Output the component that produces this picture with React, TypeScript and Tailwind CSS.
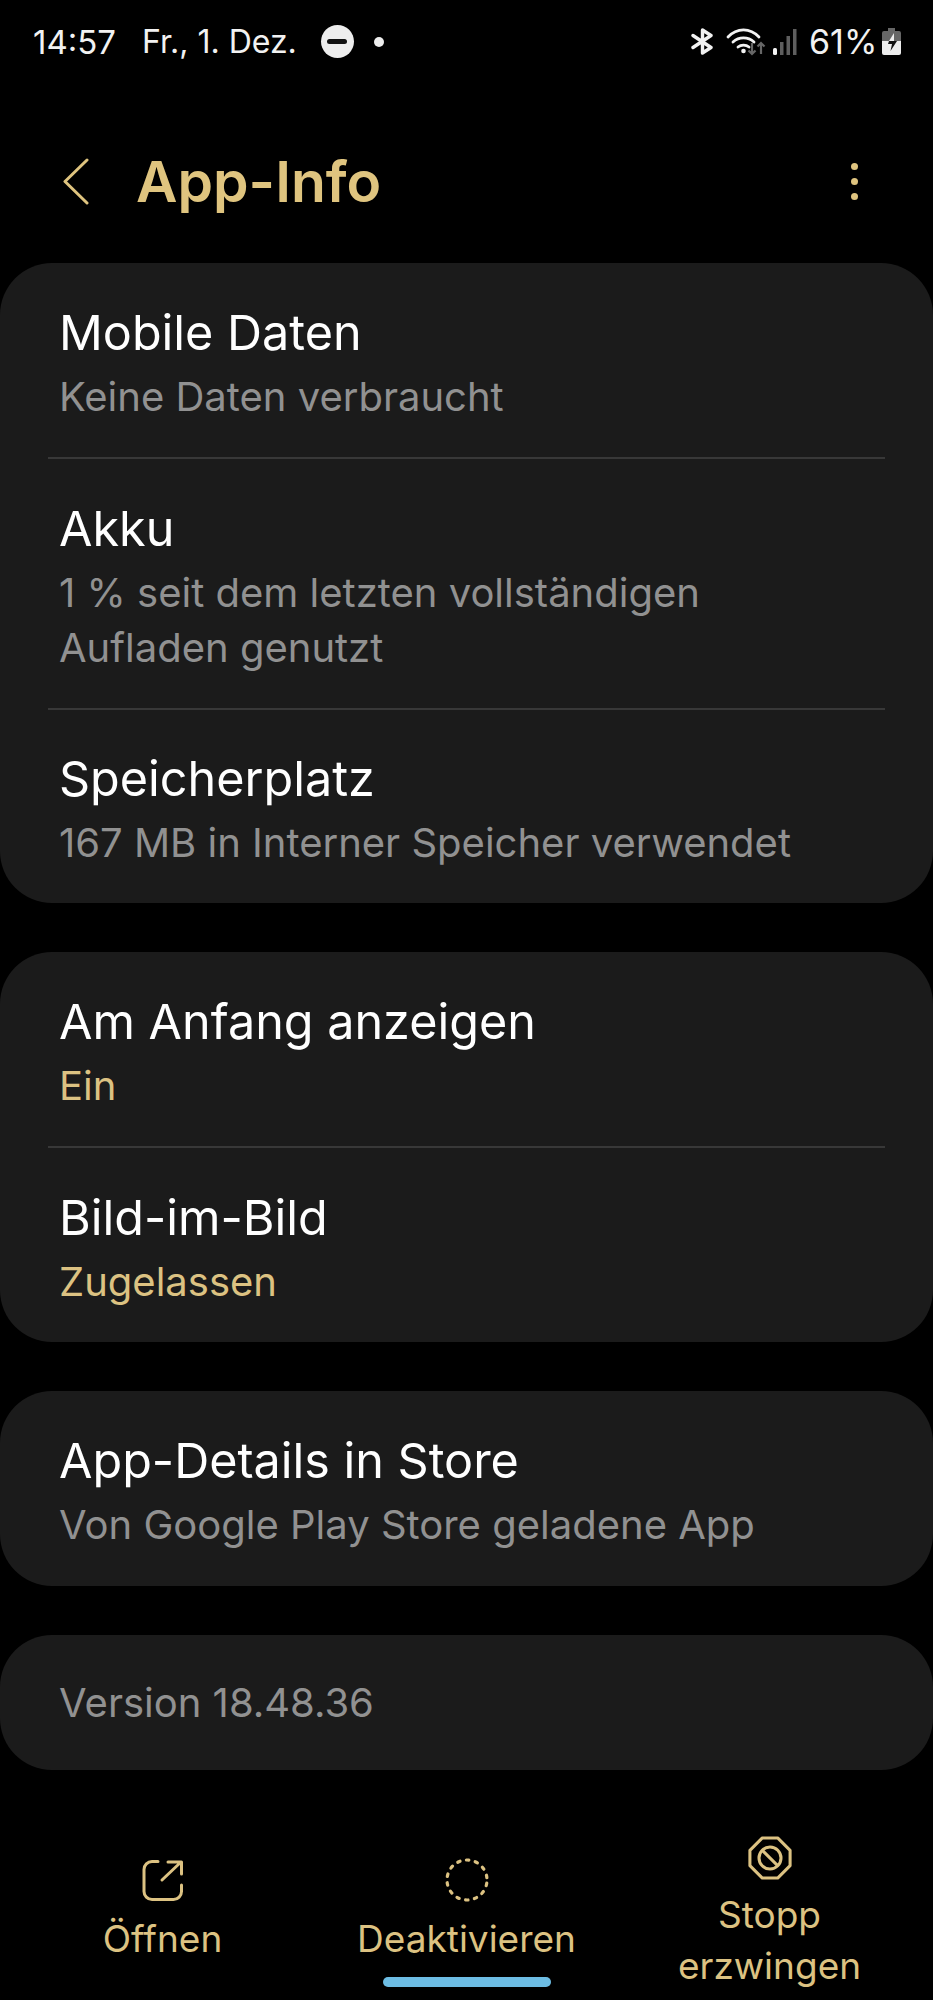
function StatusIcons() {
  return (
    <div className="flex items-center">
      {/* bluetooth */}
      <svg className="w-[23px] h-[27px]" viewBox="0 0 23 27" fill="none" stroke="#f2f2f2" strokeWidth="3.4" aria-hidden="true">
        <path d="M2 7.5l18 12-8.500 5.500V2l8.500 5.500-18 12" strokeLinejoin="round" strokeLinecap="round" />
      </svg>
      {/* wifi with data arrows */}
      <svg className="w-[40px] h-[28px] ml-[12px]" viewBox="0 0 40 28" fill="none" aria-hidden="true">
        <path d="M2 9c9-9.500 22-9.500 31 0M7 14c6-5.500 15-5.500 21 0M12 19c3-2.500 8-2.500 11 0" stroke="#f2f2f2" strokeWidth="2.800" strokeLinecap="round" />
        <circle cx="17.500" cy="23" r="2.300" fill="#f2f2f2" />
        <path d="M26 15v11m-3.500-3.500l3.500 3.500 3.500-3.500" stroke="#666" strokeWidth="2.200" />
        <path d="M35 26V15m-3.500 3.500l3.500-3.500 3.500 3.500" stroke="#666" strokeWidth="2.200" />
      </svg>
      {/* signal bars */}
      <svg className="w-[24px] h-[26px] ml-[7px]" viewBox="0 0 24 26" aria-hidden="true">
        <rect x="0" y="19" width="4" height="7" rx="1.500" fill="#f2f2f2" />
        <rect x="7" y="13" width="3.500" height="13" fill="#5e5e5e" />
        <rect x="13.500" y="7" width="3.500" height="19" fill="#5e5e5e" />
        <rect x="20" y="0" width="3.500" height="26" fill="#5e5e5e" />
      </svg>
      <span className="ml-[12px] w-[66px] text-[34px] leading-[40px]">61%</span>
      {/* battery charging */}
      <svg className="w-[19px] h-[27px] ml-[7px]" viewBox="0 0 19 27" aria-hidden="true">
        <path d="M6 0h7v3h4a2 2 0 012 2v8H0V5a2 2 0 012-2h4z" fill="#666" />
        <path d="M0 13h19v12a2 2 0 01-2 2H2a2 2 0 01-2-2z" fill="#ededed" />
        <path d="M12 5l-5 8h5z" fill="#ededed" />
        <path d="M7 13h8l-6.500 10 1.500-7H6z" fill="#111" />
      </svg>
    </div>
  )
}

function Row({ title, sub, accent, divider, nudge }: { title: string; sub: string[]; accent?: boolean; divider?: boolean; nudge?: boolean }) {
  return (
    <div className={`mx-[48px] pl-[11px] pt-[33px] pb-[33px] ${divider ? 'border-b-2 border-[#383838]' : ''} ${nudge ? '-mt-px' : ''}`}>
      <div className="text-[48.5px] leading-[73px] text-white">{title}</div>
      {sub.map((line) => (
        <div key={line} className={`text-[40px] leading-[55px] ${accent ? 'text-[#dcc282]' : 'text-[#919191]'}`}>
          {line}
        </div>
      ))}
    </div>
  )
}

export default function App() {
  return (
    <div className="relative w-[933px] h-[2000px] overflow-hidden bg-black text-[#f2f2f2] font-['Inter',sans-serif]">
      {/* status bar */}
      <div className="flex items-center justify-between pl-[33px] pr-[32px] pt-[21px] h-[62px]">
        <div className="flex items-center text-[32px] leading-[40px]">
          <span className="text-[33px]">14:57</span>
          <span className="ml-[26px]">Fr., 1. Dez.</span>
          <span className="ml-[24px] flex items-center justify-center w-[33px] h-[33px] rounded-full bg-[#ededed]">
            <span className="w-[20px] h-[5px] rounded-full bg-[#111]" />
          </span>
          <span className="ml-[20px] w-[10px] h-[10px] rounded-full bg-[#ededed]" />
        </div>
        <StatusIcons />
      </div>

      {/* header */}
      <div className="flex items-center h-[90px] mt-[75px] pl-[62px] pr-[75px] text-[#dfc47f]">
        <svg className="w-[28px] h-[48px]" viewBox="0 0 28 48" fill="none" stroke="currentColor" strokeWidth="3" strokeLinecap="round" strokeLinejoin="round" aria-hidden="true">
          <path d="M25 2L3 23.500l22 21.500" />
        </svg>
        <h1 className="ml-[46px] text-[57px] leading-[70px] font-semibold flex-1">App-Info</h1>
        <div className="flex flex-col gap-[8px] mb-[2px]">
          <span className="w-[7px] h-[7px] rounded-full bg-current" />
          <span className="w-[7px] h-[7px] rounded-full bg-current" />
          <span className="w-[7px] h-[7px] rounded-full bg-current" />
        </div>
      </div>

      {/* cards */}
      <div className="flex flex-col gap-[49px] mt-[36px]">
        <div className="rounded-[52px] bg-[#1b1b1b]">
          <Row title="Mobile Daten" sub={['Keine Daten verbraucht']} divider />
          <Row title="Akku" sub={['1 % seit dem letzten vollständigen', 'Aufladen genutzt']} divider />
          <Row title="Speicherplatz" sub={['167 MB in Interner Speicher verwendet']} nudge />
        </div>
        <div className="rounded-[52px] bg-[#1b1b1b]">
          <Row title="Am Anfang anzeigen" sub={['Ein']} accent divider />
          <Row title="Bild-im-Bild" sub={['Zugelassen']} accent />
        </div>
        <div className="rounded-[52px] bg-[#1b1b1b] pb-px">
          <Row title="App-Details in Store" sub={['Von Google Play Store geladene App']} />
        </div>
        <div className="rounded-[52px] bg-[#1b1b1b] pl-[59px] py-[40px] text-[40px] leading-[55px] text-[#919191]">
          Version 18.48.36
        </div>
      </div>

      {/* bottom actions */}
      <div className="flex items-center mt-[62px] h-[162px] px-[12px] text-[37px] text-[#dcc282] leading-[51px]">
        <div className="w-[303px] flex flex-col items-center pb-[4px] -ml-px mr-px">
          <svg className="w-[42px] h-[42px]" viewBox="0 0 42 42" fill="none" stroke="currentColor" strokeWidth="3" strokeLinecap="round" strokeLinejoin="round" aria-hidden="true">
            <path d="M16 2.500H10a8 8 0 00-8 8v22a8 8 0 008 8h21.500a8 8 0 008-8V26" />
            <path d="M26 3h13.500v12M39 3L20 21" />
          </svg>
          <span className="mt-[12px]">Öffnen</span>
        </div>
        <div className="relative w-[303px] flex flex-col items-center pb-[4px]">
          <svg className="w-[44px] h-[44px]" viewBox="0 0 44 44" fill="none" stroke="currentColor" strokeWidth="3.200" strokeLinecap="round" strokeDasharray="2.500 6.480" strokeDashoffset="-3.240" aria-hidden="true">
            <circle cx="22" cy="22" r="20" />
          </svg>
          <span className="mt-[11px]">Deaktivieren</span>
          <span className="absolute -bottom-[19px] left-[68px] w-[168px] h-[10px] rounded-full bg-[#6dbde4]" />
        </div>
        <div className="w-[303px] flex flex-col items-center">
          <svg className="w-[44px] h-[44px]" viewBox="0 0 46 46" fill="none" stroke="currentColor" strokeWidth="3.200" strokeLinejoin="round" aria-hidden="true">
            <path d="M15 2h16l13 13v16L31 44H15L2 31V15z" />
            <circle cx="23" cy="23" r="11.500" />
            <path d="M15 15l16 16" />
          </svg>
          <span className="mt-[9px] text-center">Stopp<br />erzwingen</span>
        </div>
      </div>
    </div>
  )
}
